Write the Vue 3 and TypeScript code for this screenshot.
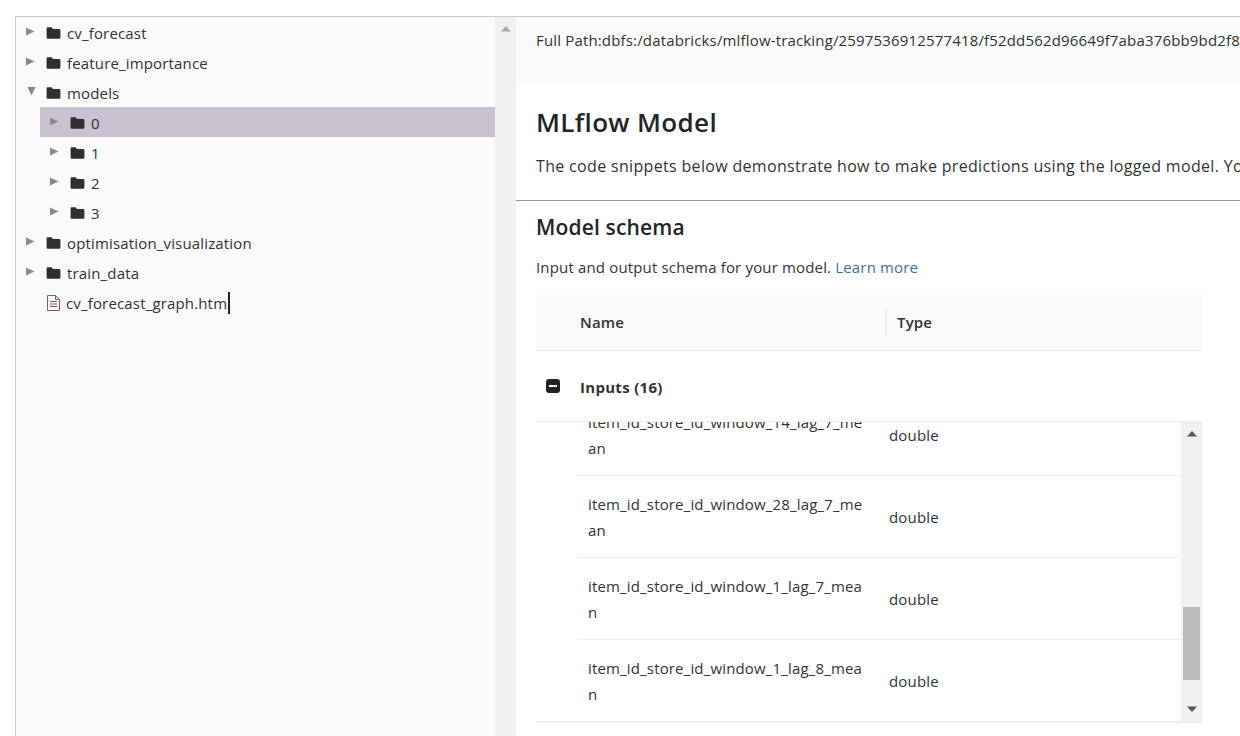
<script setup lang="ts">
interface TreeItem { label: string; depth: number; open?: boolean; active?: boolean; file?: boolean }
const tree: TreeItem[] = [
  { label: 'cv_forecast', depth: 0 },
  { label: 'feature_importance', depth: 0 },
  { label: 'models', depth: 0, open: true },
  { label: '0', depth: 1, active: true },
  { label: '1', depth: 1 },
  { label: '2', depth: 1 },
  { label: '3', depth: 1 },
  { label: 'optimisation_visualization', depth: 0 },
  { label: 'train_data', depth: 0 },
  { label: 'cv_forecast_graph.htm', depth: 0, file: true },
]
const rows = [
  'item_id_store_id_window_14_lag_7_mean',
  'item_id_store_id_window_28_lag_7_mean',
  'item_id_store_id_window_1_lag_7_mean',
  'item_id_store_id_window_1_lag_8_mean',
]
</script>

<template>
  <div class="page">
    <div class="frame">
      <aside class="tree">
        <div
          v-for="item in tree"
          :key="item.label"
          class="node"
          :class="{ active: item.active, nested: item.depth === 1, file: item.file }"
        >
          <template v-if="!item.file">
            <svg class="arrow" :class="{ open: item.open }" width="9" height="9" viewBox="0 0 10 10">
              <path d="M0 0.5 L9.5 5 L0 9.5 Z" />
            </svg>
            <svg class="folder" width="15" height="12" viewBox="0 0 15 13">
              <path d="M1.2 0.3 H5.4 L7 2.2 H13.6 Q15 2.2 15 3.6 V11.4 Q15 12.8 13.6 12.8 H1.4 Q0 12.8 0 11.4 V1.5 Q0 0.3 1.2 0.3 Z" />
            </svg>
          </template>
          <svg v-else class="doc" width="15" height="16" viewBox="0 0 15 16">
            <path d="M1.5 0.5 H9.5 L13.5 4.5 V15.5 H1.5 Z M9.5 0.5 V4.5 H13.5" />
            <path d="M4 6.5 H11 M4 9 H11 M4 11.5 H11" />
          </svg>
          <span class="label">{{ item.label }}</span><span v-if="item.file" class="caret"></span>
        </div>
      </aside>
      <div class="scroll-track">
        <svg class="track-arrow" width="12" height="6" viewBox="0 0 12 6"><path d="M6 0 L11 5.5 H1 Z" /></svg>
      </div>
      <main class="detail">
        <div class="path-bar">
          <span class="path-key">Full Path:</span><span class="path-value">dbfs:/databricks/mlflow-tracking/2597536912577418/f52dd562d96649f7aba376bb9bd2f8c1/artifacts/models/0</span>
        </div>
        <section class="intro">
          <h1>MLflow Model</h1>
          <p>The code snippets below demonstrate how to make predictions using the logged model. You can also register it to the model registry to version control your model.</p>
        </section>
        <section class="schema">
          <h2>Model schema</h2>
          <p class="sub">Input and output schema for your model. <a>Learn more</a></p>
          <div class="table">
            <div class="thead">
              <span class="th-name">Name</span>
              <span class="th-type">Type</span>
            </div>
            <div class="group">
              <span class="minus"><i></i></span>
              <span class="group-label">Inputs (16)</span>
            </div>
            <div class="body">
              <div class="rows">
                <div class="rows-inner">
                  <div v-for="r in rows" :key="r" class="row">
                    <span class="name">{{ r }}</span>
                    <span class="type">double</span>
                  </div>
                </div>
              </div>
              <div class="vbar">
                <svg width="12" height="6" viewBox="0 0 12 6"><path d="M6 0 L11 5.5 H1 Z" /></svg>
                <div class="thumb-area"><div class="thumb"></div></div>
                <svg width="12" height="6" viewBox="0 0 12 6"><path d="M6 6 L11 0.5 H1 Z" /></svg>
              </div>
            </div>
          </div>
        </section>
      </main>
    </div>
  </div>
</template>

<style>
html, body { margin: 0; background: #fff; overflow: hidden; }
</style>

<style scoped>
.page {
  width: 1240px;
  height: 736px;
  padding-top: 16px;
  box-sizing: border-box;
  overflow: hidden;
  font-family: "Open Sans", "Noto Sans", sans-serif;
  font-size: 15px;
  letter-spacing: 0.16px;
  color: #333;
}
.frame {
  display: flex;
  height: 720px;
  margin-left: 15px;
  border-top: 1px solid #ccc;
  border-left: 1px solid #ccc;
}
.tree {
  width: 479px;
  flex: none;
  background: #fafafa;
  box-sizing: border-box;
}
.node {
  display: flex;
  align-items: center;
  height: 30px;
  padding: 1px 0 0 10px;
  box-sizing: border-box;
}
.node.nested { margin-left: 24px; }
.node.active { background: #c8c2d1; }
.arrow { fill: #8a8a8a; margin-right: 11px; margin-top: -2px; flex: none; }
.arrow.open { transform: rotate(90deg); margin-top: -2px; margin-left: 1px; margin-right: 10px; }
.folder { fill: #2f2f2f; margin-right: 6px; margin-top: 1px; flex: none; }
.node.file { padding-left: 30px; }
.doc { fill: none; stroke: #8a5a70; stroke-width: 1; margin-right: 5px; flex: none; }
.label { white-space: nowrap; }
.caret { display: inline-block; width: 2px; height: 22px; background: #222; margin-left: 1px; }
.scroll-track {
  width: 21px;
  flex: none;
  background: #f0f0f0;
  display: flex;
  justify-content: center;
  padding-top: 9px;
  box-sizing: border-box;
}
.track-arrow { fill: #a8a8a8; }
.detail { flex: 1; min-width: 0; overflow: hidden; }
.path-bar {
  height: 66px;
  background: #fafafa;
  padding: 13px 0 0 20px;
  box-sizing: border-box;
  white-space: nowrap;
  line-height: 20px;
}
.intro {
  height: 118px;
  border-bottom: 1px solid #999;
  padding: 21px 0 0 20px;
  box-sizing: border-box;
  white-space: nowrap;
}
h1 {
  margin: 0;
  font-size: 26px;
  font-weight: 600;
  line-height: 36px;
  letter-spacing: 0.35px;
  color: #212529;
}
.intro p {
  margin: 14px 0 0;
  font-size: 16px;
  letter-spacing: 0.33px;
  line-height: 24px;
  color: #333;
}
.schema { padding: 0 0 0 20px; }
h2 {
  margin: 12px 0 0;
  font-size: 21px;
  font-weight: 600;
  line-height: 28px;
  letter-spacing: 0.15px;
  color: #212529;
}
.sub { margin: 14px 0 0; line-height: 24px; height: 24px; }
.sub a { color: #3f6fa8; }
.table { width: 666px; margin-top: 15px; }
.thead {
  display: flex;
  align-items: center;
  height: 57px;
  background: #fafafa;
  border-bottom: 1px solid #eee;
  box-sizing: border-box;
  font-weight: 600;
  color: #333;
}
.th-name {
  width: 307px;
  margin-left: 44px;
  flex: none;
  border-right: 2px solid #eee;
  line-height: 26px;
  box-sizing: border-box;
}
.th-type { padding-left: 10px; }
.group {
  display: flex;
  align-items: center;
  height: 71px;
  border-bottom: 1px solid #eee;
  box-sizing: border-box;
  font-weight: 700;
}
.group-label { letter-spacing: 0.3px; padding-top: 2px; }
.minus {
  width: 14px;
  height: 14px;
  margin-left: 10px;
  margin-right: 20px;
  border-radius: 3px;
  background: #222;
  display: flex;
  align-items: center;
  justify-content: center;
}
.minus i { display: block; width: 8px; height: 2px; background: #fff; }
.body { display: flex; height: 301px; border-bottom: 2px solid #eee; box-sizing: border-box; }
.rows { flex: 1; overflow: hidden; }
.rows-inner { margin-top: -28px; }
.row {
  display: flex;
  align-items: center;
  height: 82px;
  margin-left: 41px;
  border-bottom: 1px solid #eee;
  box-sizing: border-box;
}
.name {
  width: 276px;
  margin-left: 11px;
  flex: none;
  line-height: 26px;
  word-break: break-all;
}
.type { margin-left: 25px; }
.vbar {
  width: 21px;
  flex: none;
  background: #f0f0f0;
  display: flex;
  flex-direction: column;
  align-items: center;
  fill: #555;
  padding: 9px 0;
  box-sizing: border-box;
}
.thumb-area { flex: 1; width: 17px; position: relative; }
.thumb { position: absolute; left: 0; right: 0; top: 170px; height: 73px; background: #bdbdbd; }
</style>
